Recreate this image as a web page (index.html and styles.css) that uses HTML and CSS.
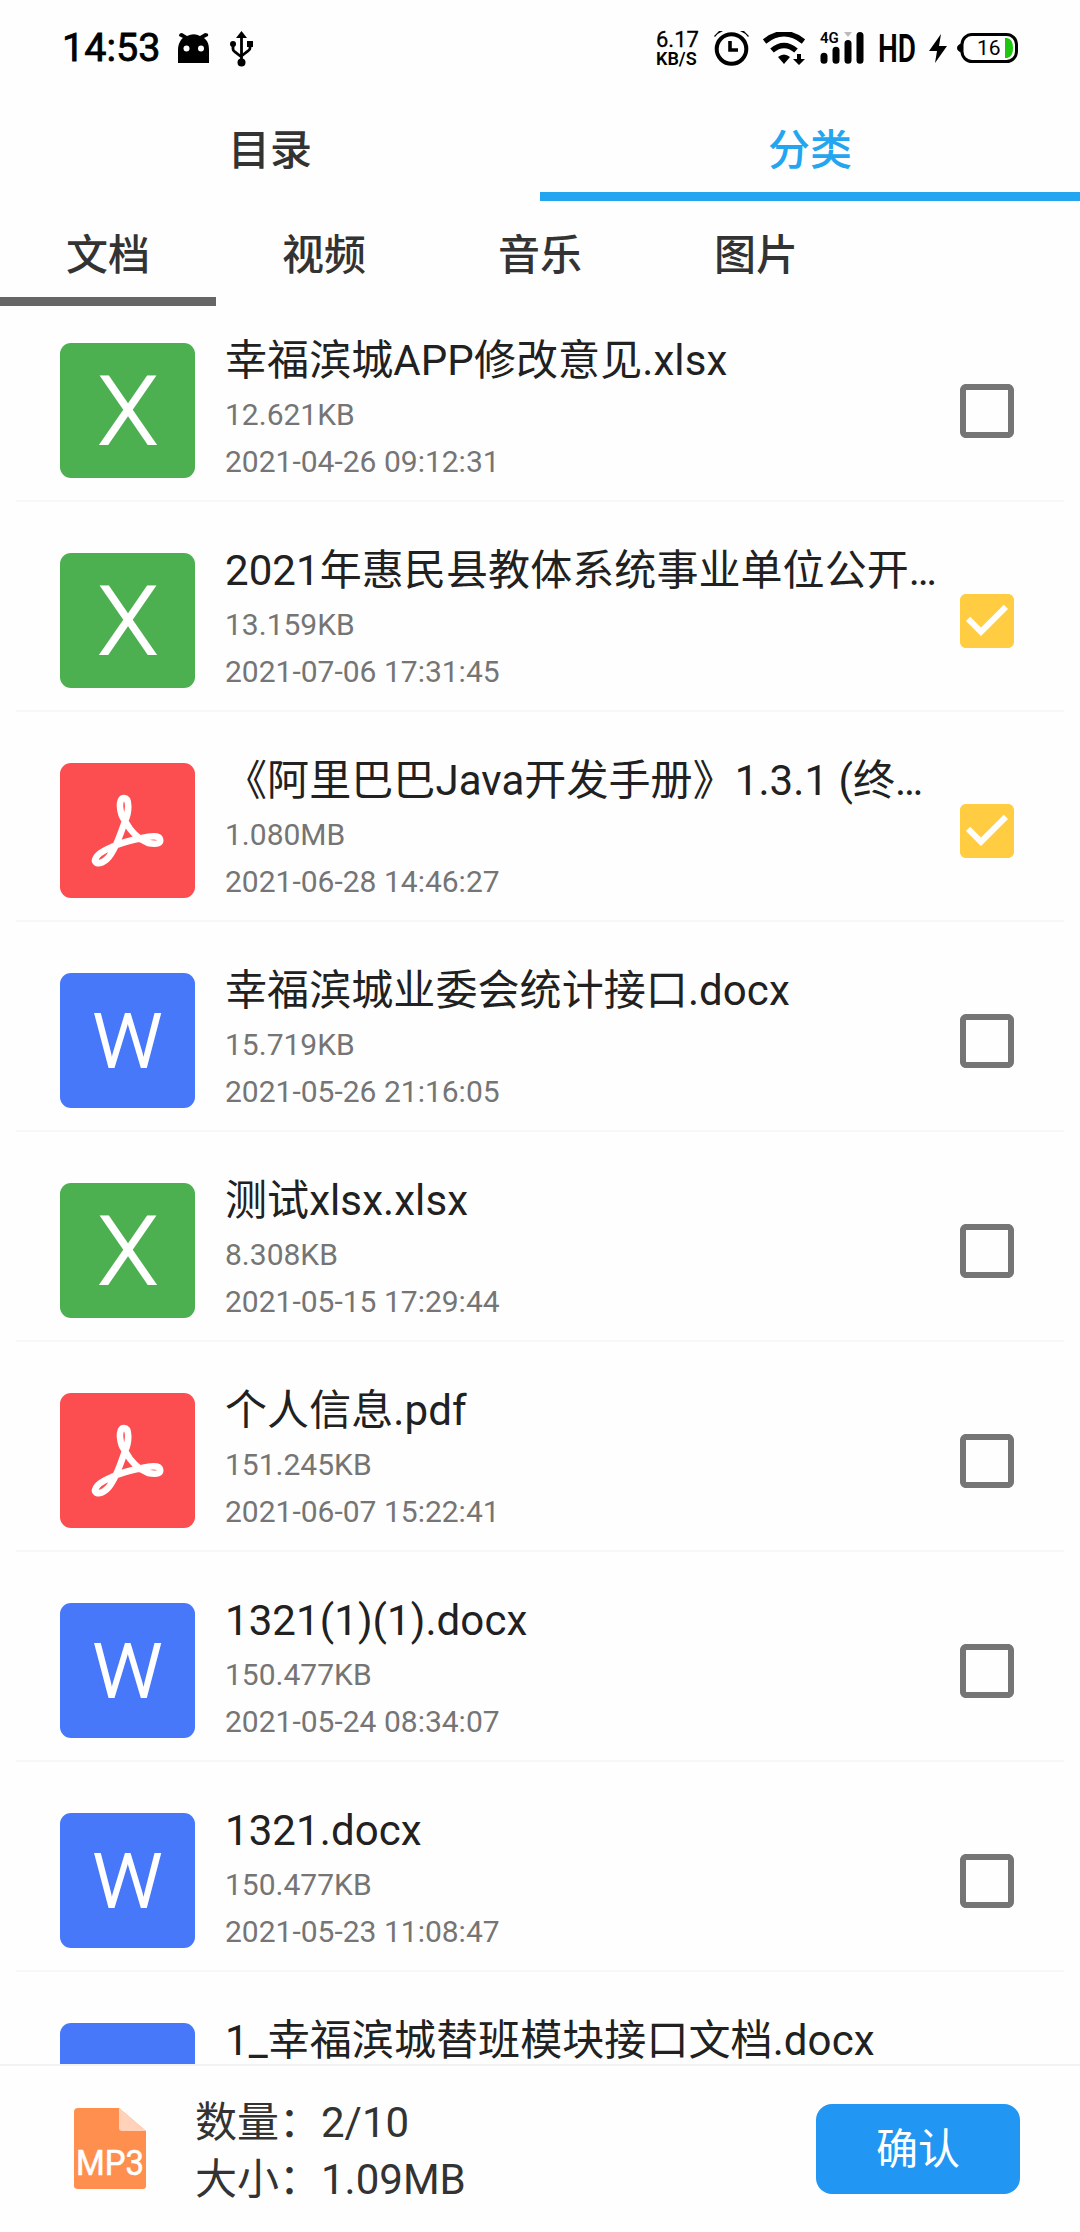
FILE: index.html
```
<!DOCTYPE html>
<html lang="zh-CN">
<head>
<meta charset="utf-8">
<title>文件选择</title>
<link rel="stylesheet" href="styles.css">
</head>
<body>
<svg width="0" height="0" class="defs">
  <symbol id="off" viewBox="3 3 18 18"><path fill="#757575" d="M19 5v14H5V5h14m0-2H5c-1.100 0-2 .9-2 2v14c0 1.100.9 2 2 2h14c1.100 0 2-.9 2-2V5c0-1.100-.9-2-2-2z"/></symbol>
  <symbol id="on" viewBox="3 3 18 18"><path fill="#ffcc42" d="M19 3H5c-1.110 0-2 .9-2 2v14c0 1.100.89 2 2 2h14c1.110 0 2-.9 2-2V5c0-1.100-.89-2-2-2zm-9 14l-5-5 1.410-1.410L10 14.170l7.590-7.590L19 8l-9 9z"/></symbol>
  <symbol id="pdf" viewBox="0 0 135 135"><path fill="none" stroke="#fff" stroke-width="6.600" stroke-linejoin="round" d="M65 58C59 50 58 35 64 35C70 35 69 50 65 58C71 69 80 77 88 80C98 82 101 80 100 76C99 72 90 73 82 75C72 77 60 80 52 84C42 88 35 93 35 98C37 103 46 99 51 91C57 82 61 70 65 58"/></symbol>
</svg>
<div class="screen">
  <header class="status">
    <span class="time">14:53</span>
    <svg class="droid" width="32" height="31" viewBox="0 0 32 31"><path d="M0 30V17C0 11 3 6 5 5L1 3Q1 0 4 0L9 3Q16 -0.500 22 3L27 0Q31 0 30 3L26 5C30 8 31 12 31 17V30Z"/><circle cx="8.500" cy="15.500" r="3" fill="#fff"/><circle cx="23" cy="15.500" r="3" fill="#fff"/></svg>
    <svg class="usb" width="23" height="36" viewBox="0 0 23 36"><path d="M11.500 4V31M3 13V18Q3 20 5 21L11.500 26M20 12V17Q20 19 18 20L11.500 25" fill="none" stroke="#000" stroke-width="2.800"/><path d="M11.500 0L17 7H6ZM17 10H23V16H17Z"/><circle cx="3" cy="13" r="3"/><circle cx="11.500" cy="31.500" r="4"/></svg>
    <div class="speed"><span>6.17</span><b>KB/S</b></div>
    <svg class="alarm" width="35" height="35" viewBox="0 0 35 35"><circle cx="17.500" cy="18" r="14.800" fill="none" stroke="#000" stroke-width="4"/><path d="M16 10V19H24" fill="none" stroke="#000" stroke-width="3.600"/><path d="M0 5L5 0H9Q4 2 1 6ZM35 5L30 0H26Q31 2 34 6Z"/></svg>
    <svg class="wifi" width="42" height="34" viewBox="0 0 42 34"><path d="M1.500 9.500Q21-6 40.500 9.500M9 18.500Q21 8.500 33 18.500" fill="none" stroke="#000" stroke-width="5.500"/><path d="M15 25Q21 20 27 25L21 32ZM34 22H38V27H42L36 33 30 27H34Z"/></svg>
    <div class="signal"><svg width="44" height="33" viewBox="0 0 44 33"><g stroke="#000" stroke-width="7" stroke-linecap="round"><path d="M4 24.200V28.200M16 18.200V28.200M28 11.500V28.200M40 3.500V28.200"/></g><path d="M24 0H32L28 5Z" fill="#bbb"/></svg><span>4G</span></div>
    <svg class="hd" width="38" height="30"><text x="0" y="28" textLength="38" lengthAdjust="spacingAndGlyphs">HD</text></svg>
    <svg class="bolt" width="18" height="29" viewBox="0 0 18 29"><path d="M12 0L0 17H8L6 29 18 12H10Z"/></svg>
    <div class="battery"><svg width="61" height="30" viewBox="0 0 61 30"><path d="M5 10Q0 12 0 15Q0 18 5 20Z"/><rect x="5" y="1.500" width="54.500" height="27" rx="10" fill="#fff" stroke="#000" stroke-width="3"/><path d="M48 5H50Q56 6 56 15T50 25H48Z" fill="#1ec60e"/></svg><span>16</span></div>
  </header>
  <nav class="tabs main"><div>目录</div><div class="active">分类</div></nav>
  <nav class="tabs sub"><div class="active">文档</div><div>视频</div><div>音乐</div><div>图片</div></nav>
  <main class="list">
    <div class="row"><div class="icon x"><svg><text x="38" y="101" textLength="60" lengthAdjust="spacingAndGlyphs">X</text></svg></div><div class="info"><h3>幸福滨城APP修改意见.xlsx</h3><p>12.621KB</p><p>2021-04-26 09:12:31</p></div><svg class="check"><use href="#off"/></svg></div>
    <div class="row"><div class="icon x"><svg><text x="38" y="101" textLength="60" lengthAdjust="spacingAndGlyphs">X</text></svg></div><div class="info"><h3>2021年惠民县教体系统事业单位公开…</h3><p>13.159KB</p><p>2021-07-06 17:31:45</p></div><svg class="check"><use href="#on"/></svg></div>
    <div class="row"><div class="icon pdf"><svg><use href="#pdf"/></svg></div><div class="info"><h3>《阿里巴巴Java开发手册》1.3.1 (终…</h3><p>1.080MB</p><p>2021-06-28 14:46:27</p></div><svg class="check"><use href="#on"/></svg></div>
    <div class="row"><div class="icon w"><svg><text x="33" y="94" textLength="69" lengthAdjust="spacingAndGlyphs">W</text></svg></div><div class="info"><h3>幸福滨城业委会统计接口.docx</h3><p>15.719KB</p><p>2021-05-26 21:16:05</p></div><svg class="check"><use href="#off"/></svg></div>
    <div class="row"><div class="icon x"><svg><text x="38" y="101" textLength="60" lengthAdjust="spacingAndGlyphs">X</text></svg></div><div class="info"><h3>测试xlsx.xlsx</h3><p>8.308KB</p><p>2021-05-15 17:29:44</p></div><svg class="check"><use href="#off"/></svg></div>
    <div class="row"><div class="icon pdf"><svg><use href="#pdf"/></svg></div><div class="info"><h3>个人信息.pdf</h3><p>151.245KB</p><p>2021-06-07 15:22:41</p></div><svg class="check"><use href="#off"/></svg></div>
    <div class="row"><div class="icon w"><svg><text x="33" y="94" textLength="69" lengthAdjust="spacingAndGlyphs">W</text></svg></div><div class="info"><h3>1321(1)(1).docx</h3><p>150.477KB</p><p>2021-05-24 08:34:07</p></div><svg class="check"><use href="#off"/></svg></div>
    <div class="row"><div class="icon w"><svg><text x="33" y="94" textLength="69" lengthAdjust="spacingAndGlyphs">W</text></svg></div><div class="info"><h3>1321.docx</h3><p>150.477KB</p><p>2021-05-23 11:08:47</p></div><svg class="check"><use href="#off"/></svg></div>
    <div class="row"><div class="icon w"></div><div class="info"><h3>1_幸福滨城替班模块接口文档.docx</h3></div></div>
  </main>
  <footer class="bar">
    <svg class="mp3" width="73" height="82" viewBox="0 0 73 82"><path d="M4 0H45L72 23V78Q72 81 69 81H4Q0 81 0 78V4Q0 0 4 0Z" fill="#ff8f4e"/><path d="M45 0L72 23H48Q45 23 45 20Z" fill="#ffd2b9"/><text x="2" y="67" textLength="68" lengthAdjust="spacingAndGlyphs">MP3</text></svg>
    <div class="totals"><div>数量：2/10</div><div>大小：1.09MB</div></div>
    <button class="ok">确认</button>
  </footer>
</div>
</body>
</html>
```
FILE: styles.css
```
* { box-sizing: border-box; margin: 0; padding: 0; }
body { background: #fefefe; font-family: Roboto, "Noto Sans CJK SC", sans-serif; color: #212121; }
.defs { display: block; height: 0; }
.screen { width: 1080px; height: 2232px; display: flex; flex-direction: column; overflow: hidden; }

.status { height: 102px; flex: none; display: flex; align-items: flex-start; padding: 31px 0 0 62px; color: #000; }
.status svg { display: block; }
.time { font-size: 39.500px; line-height: 46px; font-weight: 400; -webkit-text-stroke: 0.800px #000; width: 117px; margin-top: -6px; white-space: nowrap; }
.droid { margin-top: 2px; margin-left: -1px; }
.usb { margin: 0 0 0 20px; }
.speed { width: 44px; margin: 0 14px 0 auto; display: flex; flex-direction: column; font-weight: 500; }
.speed span { font-size: 22px; line-height: 18px; white-space: nowrap; font-weight: 400; -webkit-text-stroke: 0.300px #000; }
.speed b { font-size: 18px; line-height: 19px; font-weight: 600; white-space: nowrap; }
.alarm { margin: 0 14px 0 0; }
.wifi { margin: 1px 15px 0 0; }
.signal { position: relative; margin: 1px 14px 0 0; }
.signal span { position: absolute; left: 0; top: -1px; font-size: 15px; line-height: 15px; font-weight: 600; }
.hd { margin: 3px 13px 0 0; overflow: visible; }
.hd text { font-size: 39px; font-weight: 600; }
.bolt { margin: 3px 10px 0 0; }
.battery { position: relative; margin: 2px 62px 0 0; }
.battery span { position: absolute; left: 20px; top: 4px; font-size: 21px; line-height: 22px; }

.tabs { display: flex; flex: none; font-size: 42px; font-weight: 500; color: #333; text-align: center; }
.tabs div { border-bottom: 9px solid transparent; }
.main { height: 99px; line-height: 97px; }
.main div { width: 50%; }
.main .active { color: #24a5ef; border-color: #24a5ef; }
.sub { height: 105px; line-height: 109px; }
.sub div { width: 216px; }
.sub .active { border-color: #666; }

.list { flex: 1; min-height: 0; overflow: hidden; padding: 0 16px; }
.row { height: 210px; display: flex; padding: 51px 50px 0 44px; border-bottom: 2px solid #f7f7f7; }
.row:first-child { height: 196px; padding-top: 37px; }
.icon { width: 135px; height: 135px; flex: none; border-radius: 11px; }
.icon svg { display: block; width: 135px; height: 135px; }
.icon text { font-weight: 300; fill: #fff; stroke: #fff; stroke-width: 1.800px; }
.x { background: #4caf50; font-size: 94px; }
.w { background: #4878fa; font-size: 74px; }
.pdf { background: #fc4e50; }
.info { width: 715px; margin: -13px 0 0 30px; }
.info h3 { font-size: 42px; line-height: 62px; font-weight: 400; letter-spacing: 0.080px; white-space: nowrap; }
.info p { font-size: 30px; line-height: 47px; color: #757575; }
.info h3 + p { margin-top: -1px; }
.check { width: 54px; height: 54px; margin: 41px 0 0 auto; }

.bar { height: 168px; flex: none; display: flex; align-items: flex-start; padding: 38px 60px 0 74px; border-top: 2px solid #f2f2f2; background: #fefefe; }
.mp3 { margin-top: 4px; overflow: visible; }
.mp3 text { font-size: 35px; font-weight: 400; fill: #fff; stroke: #fff; stroke-width: 0.600px; }
.totals { margin: -10px 0 0 48px; font-size: 42px; line-height: 57px; color: #333; }
.ok { width: 204px; height: 90px; padding-top: 2px; margin-left: auto; border: 0; border-radius: 16px; background: #2196f3; color: #fff; font: 400 42px/88px Roboto, "Noto Sans CJK SC", sans-serif; }
```
